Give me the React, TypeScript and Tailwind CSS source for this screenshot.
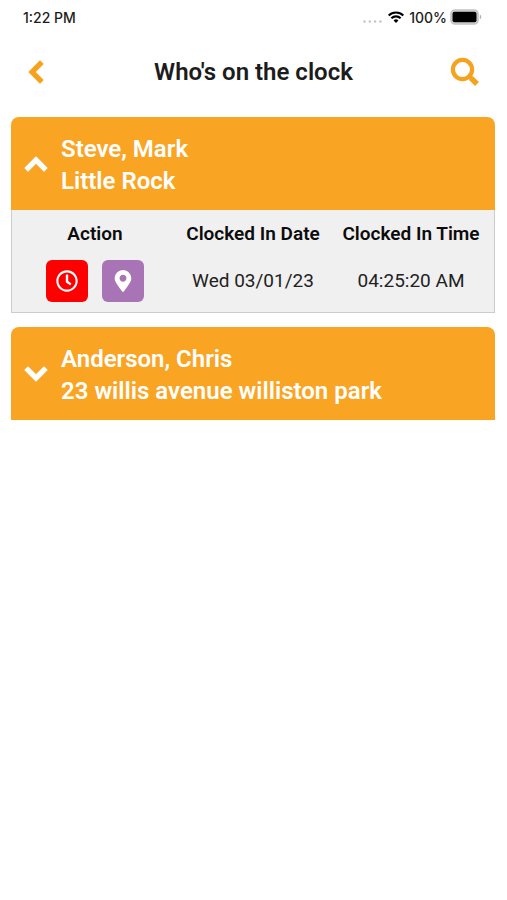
import { useState } from "react";
import { FaMapMarkerAlt, FaRegClock } from "react-icons/fa";

type Entry = { date: string; time: string };
type Employee = { id: string; name: string; location: string; entries: Entry[] };

const employees: Employee[] = [
  {
    id: "steve",
    name: "Steve, Mark",
    location: "Little Rock",
    entries: [{ date: "Wed 03/01/23", time: "04:25:20 AM" }],
  },
  { id: "anderson", name: "Anderson, Chris", location: "23 willis avenue williston park", entries: [] },
];

const chevronPaths = {
  up: "M12 4.3 22.7 15l-2.7 2.7-8-8-8 8L1.3 15z",
  down: "M12 17.7 22.7 7 20 4.300l-8 8-8-8L1.3 7z",
  left: "M5.3 12 16 1.3 18.7 4l-8 8 8 8L16 22.7z",
};

function Chevron({ direction }: { direction: keyof typeof chevronPaths }) {
  return (
    <svg className="size-6 shrink-0" viewBox="0 0 24 24" fill="currentColor" stroke="currentColor" strokeWidth="1.6" strokeLinejoin="round" aria-hidden="true">
      <path d={chevronPaths[direction]} />
    </svg>
  );
}

function StatusBar() {
  return (
    <div className="flex h-[34px] items-center justify-between pr-[25px] pl-[23px] font-['Inter','Liberation_Sans',sans-serif] text-[14px] font-medium text-[#1c1c1c]">
      <span>1:22 PM</span>
      <div className="flex items-center">
        <svg className="mt-2 mr-[5px] h-[3px] w-[21px]" viewBox="0 0 21 3" fill="#c4c4c4" aria-hidden="true">
          <circle cx="2.5" cy="1.5" r="1.2" />
          <circle cx="7.8" cy="1.5" r="1.2" />
          <circle cx="13.1" cy="1.5" r="1.2" />
          <circle cx="18.4" cy="1.5" r="1.2" />
        </svg>
        <svg className="mr-[5px] h-3 w-4" viewBox="0 0 16 12" aria-hidden="true">
          <g fill="none" stroke="#000" strokeWidth="2.1">
            <path d="M0.7 4.5a10.3 10.3 0 0 1 14.6 0" />
            <path d="M3.4 7.3a6.5 6.5 0 0 1 9.2 0" />
          </g>
          <path d="M8 11.9 5.6 9.5a3.4 3.4 0 0 1 4.8 0z" fill="#000" />
        </svg>
        <span className="mr-[3px]">100%</span>
        <svg className="h-4 w-8" viewBox="0 0 32 16" aria-hidden="true">
          <rect x="1" y="1" width="27" height="14" rx="4" fill="#d6d6d6" stroke="#c2c2c2" strokeWidth="1.6" />
          <rect x="2.5" y="2.7" width="24" height="10.6" rx="2" fill="#000" />
          <path d="M29.8 5.5c2 .8 2 4.2 0 5z" fill="#b5b5b5" />
        </svg>
      </div>
    </div>
  );
}

function EmployeeCard({ employee, initiallyOpen }: { employee: Employee; initiallyOpen: boolean }) {
  const [open, setOpen] = useState(initiallyOpen);
  return (
    <section>
      <button
        type="button"
        aria-expanded={open}
        onClick={() => setOpen(!open)}
        className="flex w-full items-center gap-[13px] rounded-t-lg bg-[#faa424] px-[13px] pt-4 pb-[13px] text-left text-[24px] leading-8 font-semibold text-white"
      >
        <Chevron direction={open ? "up" : "down"} />
        <span>
          <span className="block">{employee.name}</span>
          <span className="block">{employee.location}</span>
        </span>
      </button>
      {open && employee.entries.length > 0 && (
        <div className="border border-t-0 border-[#cccccc] bg-[#f0f0f0] px-1 pb-[10px]">
          <table className="w-full table-fixed text-center text-[19px] leading-6 text-[#222222]">
            <thead>
              <tr className="text-[#0c0c0c]">
                <th className="pt-3 pb-[14px] font-semibold">Action</th>
                <th className="pt-3 pb-[14px] font-semibold whitespace-nowrap">Clocked In Date</th>
                <th className="pt-3 pb-[14px] font-semibold whitespace-nowrap">Clocked In Time</th>
              </tr>
            </thead>
            <tbody>
              {employee.entries.map((entry) => (
                <tr key={entry.date}>
                  <td>
                    <div className="flex justify-center gap-[14px] text-white">
                      <button type="button" aria-label="Clock out" className="flex size-[42px] items-center justify-center rounded-md bg-[#fe0000]">
                        <FaRegClock className="size-[22px]" aria-hidden="true" />
                      </button>
                      <button type="button" aria-label="Show on map" className="flex size-[42px] items-center justify-center rounded-md bg-[#a974b5]">
                        <FaMapMarkerAlt className="size-[22px]" aria-hidden="true" />
                      </button>
                    </div>
                  </td>
                  <td>{entry.date}</td>
                  <td>{entry.time}</td>
                </tr>
              ))}
            </tbody>
          </table>
        </div>
      )}
    </section>
  );
}

export default function App() {
  return (
    <div className="min-h-screen bg-white font-['Roboto','Liberation_Sans',sans-serif]">
      <StatusBar />
      <header className="grid h-[76px] grid-cols-[1fr_auto_1fr] items-center px-6 text-[#f5a21f]">
        <button type="button" aria-label="Back" className="justify-self-start">
          <Chevron direction="left" />
        </button>
        <h1 className="text-[24px] leading-8 font-semibold text-[#1c1c1c]">Who's on the clock</h1>
        <button type="button" aria-label="Search" className="mr-[3px] justify-self-end">
          <svg className="size-[30px]" viewBox="0 0 30 30" fill="none" stroke="currentColor" aria-hidden="true">
            <circle cx="12.5" cy="12.5" r="9.6" strokeWidth="4.2" />
            <path d="m18.5 18.5 4 4" strokeWidth="4" />
            <path d="m21 21 6 6" strokeWidth="5.400" />
          </svg>
        </button>
      </header>
      <main className="flex flex-col gap-[14px] pt-[7px] pr-3 pl-[11px]">
        {employees.map((employee, index) => (
          <EmployeeCard key={employee.id} employee={employee} initiallyOpen={index === 0} />
        ))}
      </main>
    </div>
  );
}
